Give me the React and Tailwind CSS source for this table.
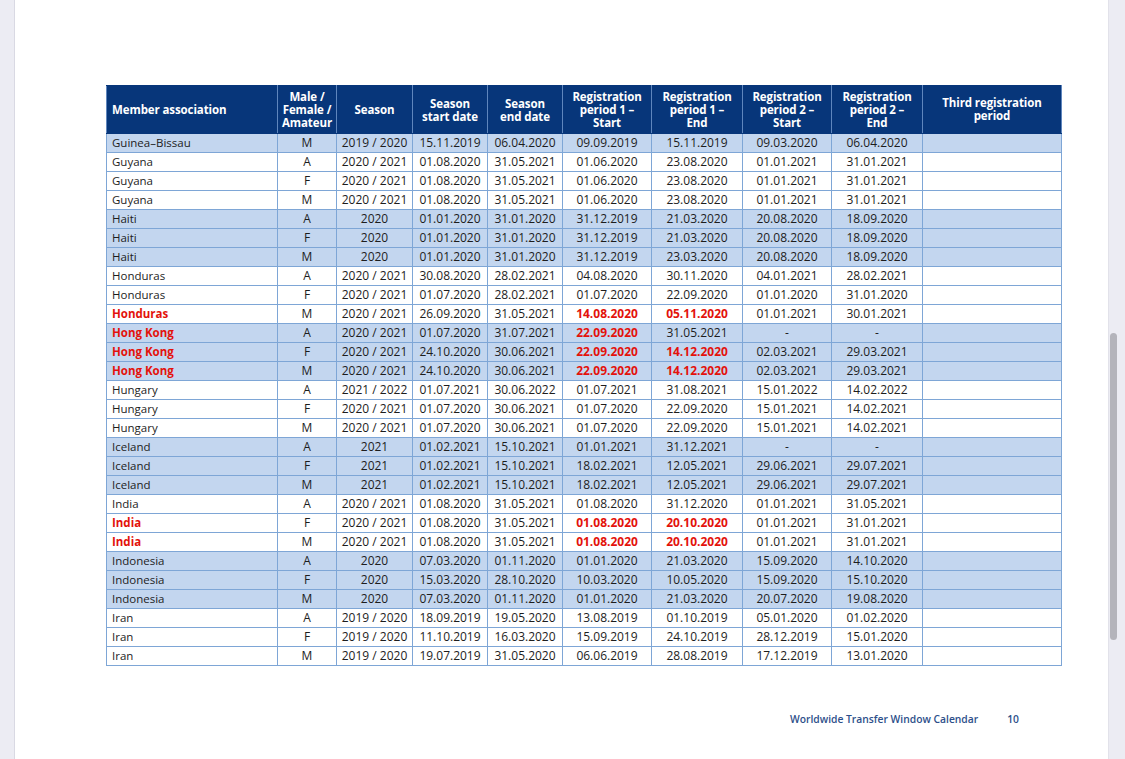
const rows = [
  ["Guinea–Bissau", "M", "2019 / 2020", "15.11.2019", "06.04.2020", "09.09.2019", "15.11.2019", "09.03.2020", "06.04.2020", true],
  ["Guyana", "A", "2020 / 2021", "01.08.2020", "31.05.2021", "01.06.2020", "23.08.2020", "01.01.2021", "31.01.2021", false],
  ["Guyana", "F", "2020 / 2021", "01.08.2020", "31.05.2021", "01.06.2020", "23.08.2020", "01.01.2021", "31.01.2021", false],
  ["Guyana", "M", "2020 / 2021", "01.08.2020", "31.05.2021", "01.06.2020", "23.08.2020", "01.01.2021", "31.01.2021", false],
  ["Haiti", "A", "2020", "01.01.2020", "31.01.2020", "31.12.2019", "21.03.2020", "20.08.2020", "18.09.2020", true],
  ["Haiti", "F", "2020", "01.01.2020", "31.01.2020", "31.12.2019", "21.03.2020", "20.08.2020", "18.09.2020", true],
  ["Haiti", "M", "2020", "01.01.2020", "31.01.2020", "31.12.2019", "23.03.2020", "20.08.2020", "18.09.2020", true],
  ["Honduras", "A", "2020 / 2021", "30.08.2020", "28.02.2021", "04.08.2020", "30.11.2020", "04.01.2021", "28.02.2021", false],
  ["Honduras", "F", "2020 / 2021", "01.07.2020", "28.02.2021", "01.07.2020", "22.09.2020", "01.01.2020", "31.01.2020", false],
  ["!Honduras", "M", "2020 / 2021", "26.09.2020", "31.05.2021", "!14.08.2020", "!05.11.2020", "01.01.2021", "30.01.2021", false],
  ["!Hong Kong", "A", "2020 / 2021", "01.07.2020", "31.07.2021", "!22.09.2020", "31.05.2021", "-", "-", true],
  ["!Hong Kong", "F", "2020 / 2021", "24.10.2020", "30.06.2021", "!22.09.2020", "!14.12.2020", "02.03.2021", "29.03.2021", true],
  ["!Hong Kong", "M", "2020 / 2021", "24.10.2020", "30.06.2021", "!22.09.2020", "!14.12.2020", "02.03.2021", "29.03.2021", true],
  ["Hungary", "A", "2021 / 2022", "01.07.2021", "30.06.2022", "01.07.2021", "31.08.2021", "15.01.2022", "14.02.2022", false],
  ["Hungary", "F", "2020 / 2021", "01.07.2020", "30.06.2021", "01.07.2020", "22.09.2020", "15.01.2021", "14.02.2021", false],
  ["Hungary", "M", "2020 / 2021", "01.07.2020", "30.06.2021", "01.07.2020", "22.09.2020", "15.01.2021", "14.02.2021", false],
  ["Iceland", "A", "2021", "01.02.2021", "15.10.2021", "01.01.2021", "31.12.2021", "-", "-", true],
  ["Iceland", "F", "2021", "01.02.2021", "15.10.2021", "18.02.2021", "12.05.2021", "29.06.2021", "29.07.2021", true],
  ["Iceland", "M", "2021", "01.02.2021", "15.10.2021", "18.02.2021", "12.05.2021", "29.06.2021", "29.07.2021", true],
  ["India", "A", "2020 / 2021", "01.08.2020", "31.05.2021", "01.08.2020", "31.12.2020", "01.01.2021", "31.05.2021", false],
  ["!India", "F", "2020 / 2021", "01.08.2020", "31.05.2021", "!01.08.2020", "!20.10.2020", "01.01.2021", "31.01.2021", false],
  ["!India", "M", "2020 / 2021", "01.08.2020", "31.05.2021", "!01.08.2020", "!20.10.2020", "01.01.2021", "31.01.2021", false],
  ["Indonesia", "A", "2020", "07.03.2020", "01.11.2020", "01.01.2020", "21.03.2020", "15.09.2020", "14.10.2020", true],
  ["Indonesia", "F", "2020", "15.03.2020", "28.10.2020", "10.03.2020", "10.05.2020", "15.09.2020", "15.10.2020", true],
  ["Indonesia", "M", "2020", "07.03.2020", "01.11.2020", "01.01.2020", "21.03.2020", "20.07.2020", "19.08.2020", true],
  ["Iran", "A", "2019 / 2020", "18.09.2019", "19.05.2020", "13.08.2019", "01.10.2019", "05.01.2020", "01.02.2020", false],
  ["Iran", "F", "2019 / 2020", "11.10.2019", "16.03.2020", "15.09.2019", "24.10.2019", "28.12.2019", "15.01.2020", false],
  ["Iran", "M", "2019 / 2020", "19.07.2019", "31.05.2020", "06.06.2019", "28.08.2019", "17.12.2019", "13.01.2020", false],
];

const headers = [
  ["Member association"],
  ["Male /", "Female /", "Amateur"],
  ["Season"],
  ["Season", "start date"],
  ["Season", "end date"],
  ["Registration", "period 1 –", "Start"],
  ["Registration", "period 1 –", "End"],
  ["Registration", "period 2 –", "Start"],
  ["Registration", "period 2 –", "End"],
  ["Third registration", "period"],
];

const widths = ["w-[171px]", "w-[59px]", "w-[76px]", "w-[75px]", "w-[75px]", "w-[89px]", "w-[91px]", "w-[89px]", "w-[91px]", "w-[139px]"];

function Cell({ value, first }) {
  const red = value.startsWith("!");
  const text = red ? value.slice(1) : value;
  return (
    <td
      className={`h-[19px] p-0 border border-[#7ea6d6] leading-none whitespace-nowrap ${
        first ? "text-left pl-[5px] text-[11.5px]" : "text-center text-[12px]"
      } ${red ? "text-[#e3120b] font-bold" : "text-[#1d1d1d]"}`}
    >
      {text}
    </td>
  );
}

export default function App() {
  return (
    <div
      className="flex w-[1125px] h-[759px] overflow-hidden bg-white"
      style={{ fontFamily: '"Open Sans", "Noto Sans", sans-serif' }}
    >
      {/* left gutter */}
      <div className="w-[15px] shrink-0 bg-[#ececf3] border-r border-[#d9d9e3]" />

      {/* page */}
      <div className="flex-1 bg-white pt-[85px] pl-[91px]">
        <table className="border-collapse table-fixed w-[955px]">
          <thead>
            <tr>
              {headers.map((h, i) => (
                <th
                  key={i}
                  className={`${widths[i]} h-[48px] p-0 bg-[#07367a] text-white font-bold text-[11.5px] tracking-[-0.1px] leading-[13px] border border-[#07367a] border-l-[#5f86bd] border-r-[#5f86bd] ${
                    i === 0 ? "text-left pl-[5px] align-middle" : "text-center align-middle"
                  } ${i === 9 ? "align-top pt-[10px]" : ""}`}
                >
                  {h.map((line, j) => (
                    <div key={j}>{line}</div>
                  ))}
                </th>
              ))}
            </tr>
          </thead>
          <tbody>
            {rows.map((r, i) => (
              <tr key={i} className={r[9] ? "bg-[#c3d6ef]" : "bg-white"}>
                {r.slice(0, 9).map((v, j) => (
                  <Cell key={j} value={v} first={j === 0} />
                ))}
                <td className="h-[19px] p-0 border border-[#7ea6d6]" />
              </tr>
            ))}
          </tbody>
        </table>

        {/* footer */}
        <div className="flex items-center mt-[46px] ml-[684px] text-[10.3px] font-semibold text-[#2d4f8a]">
          <span>Worldwide Transfer Window Calendar</span>
          <span className="ml-[29px]">10</span>
        </div>
      </div>

      {/* right gutter with scrollbar */}
      <div className="w-[17px] shrink-0 bg-[#ececf3] border-l border-[#e2e2ea]">
        <div className="mt-[333px] ml-[1px] w-[7px] h-[307px] rounded-full bg-[#b4b4bb]" />
      </div>
    </div>
  );
}
